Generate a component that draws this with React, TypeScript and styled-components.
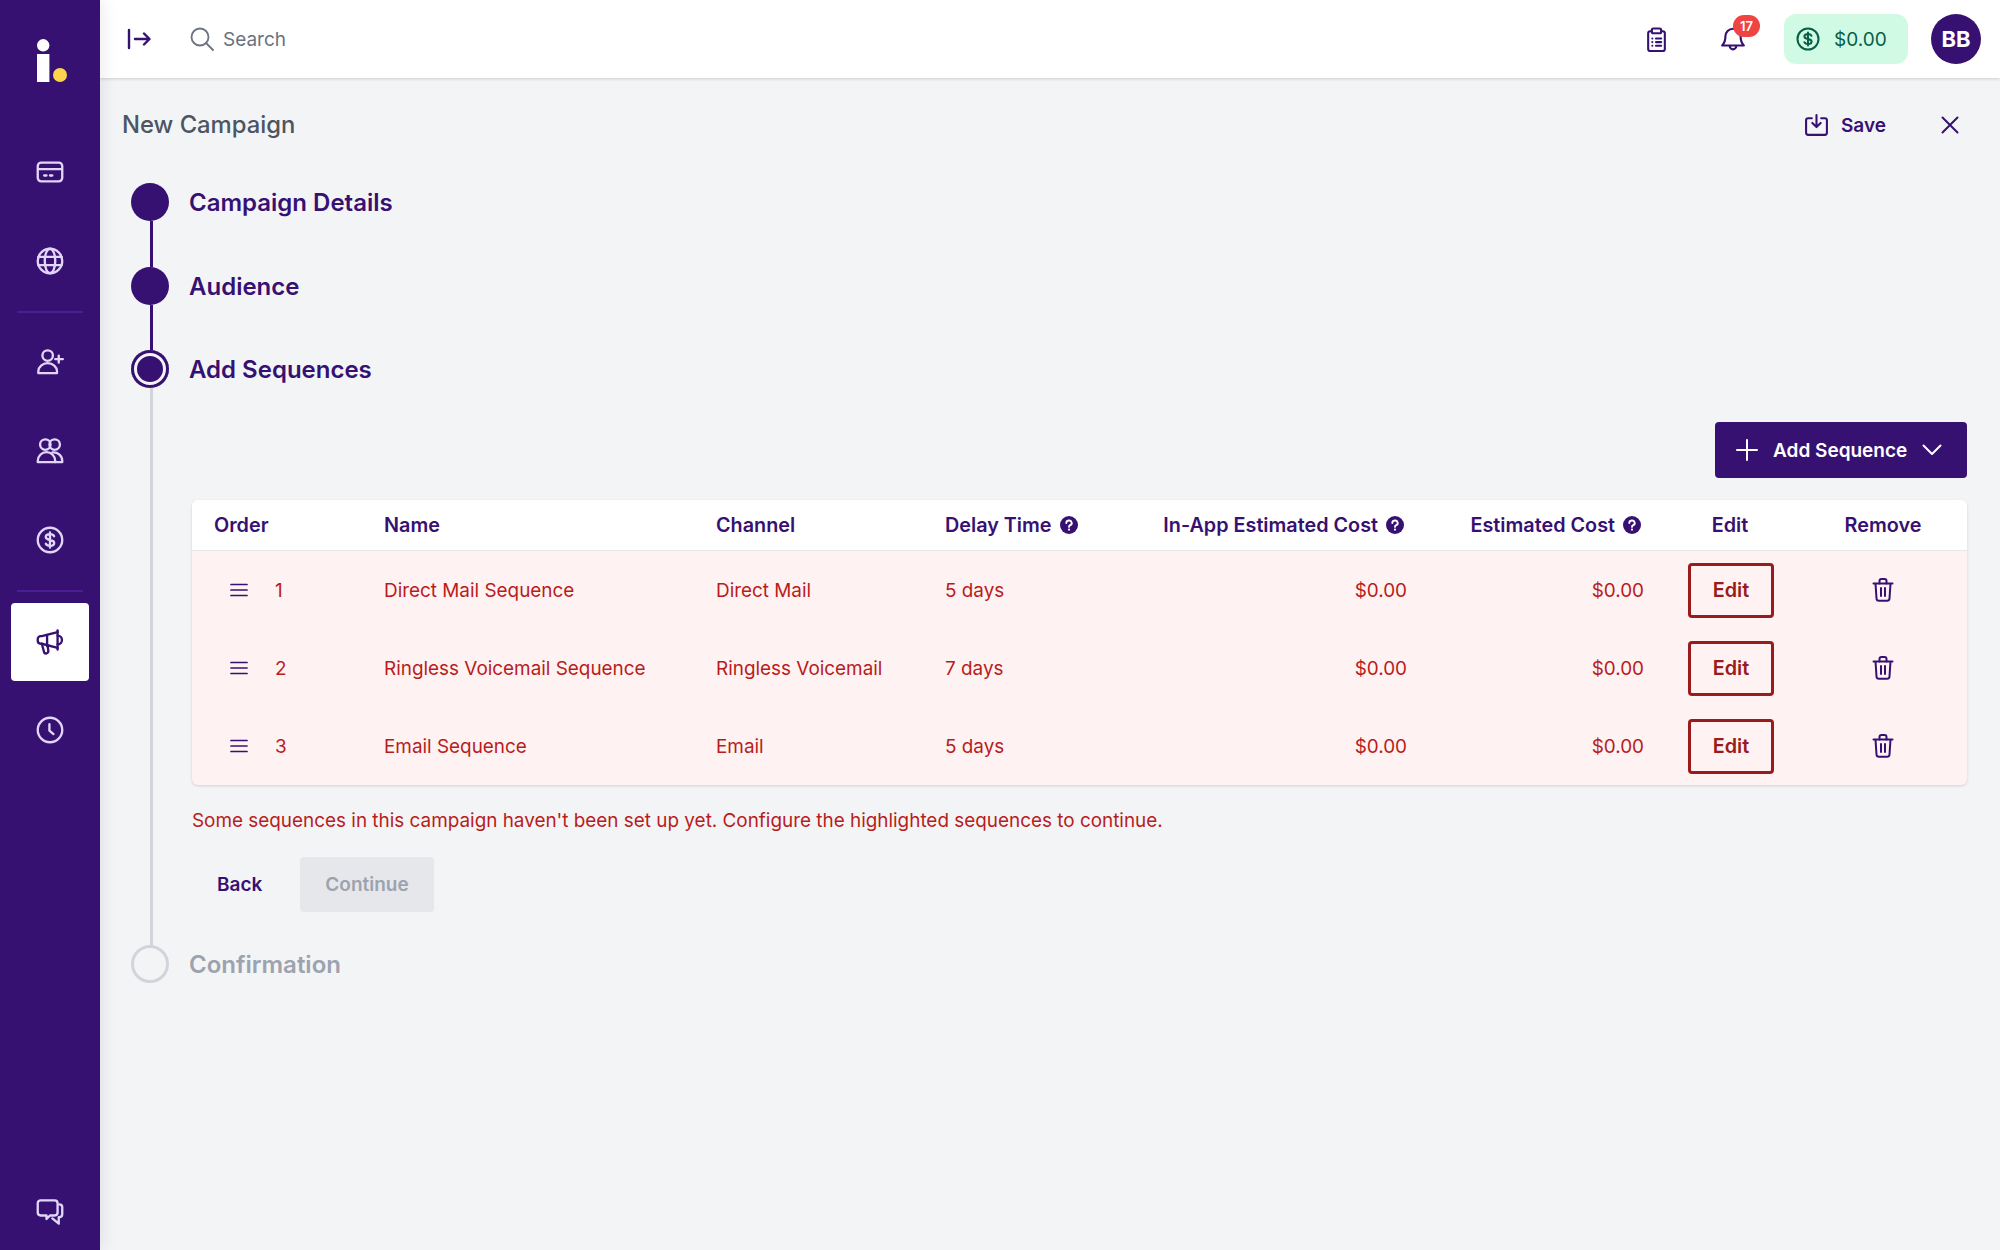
import React from "react";
import styled, { createGlobalStyle } from "styled-components";

const PURPLE = "#361172";
const RED = "#b91c1c";

const Global = createGlobalStyle`
  html, body { margin: 0; padding: 0; height: 100%; }
  body { font-family: Inter, "Liberation Sans", sans-serif; background: #f3f4f6; color: ${PURPLE}; }
  #root { height: 100%; }
  * { box-sizing: border-box; }
`;

const Page = styled.div`
  display: flex;
  width: 2000px;
  height: 1250px;
  overflow: hidden;
  background: #f3f4f6;
`;

const Sidebar = styled.aside`
  position: relative;
  z-index: 2;
  flex: 0 0 100px;
  display: flex;
  flex-direction: column;
  align-items: center;
  background: ${PURPLE};
  box-shadow: 2px 0 16px rgba(17, 24, 39, 0.09);
`;

const LogoSlot = styled.div`
  height: 133px;
  width: 100%;
  display: flex;
  justify-content: center;
  padding: 39px 0 0 4px;
`;

const SideNav = styled.nav`
  display: flex;
  flex-direction: column;
  align-items: center;
  gap: 11px;
  flex: 1;
`;

const SideItem = styled.div<{ $active?: boolean }>`
  width: 78px;
  height: 78px;
  flex: 0 0 78px;
  display: flex;
  align-items: center;
  justify-content: center;
  border-radius: 4px;
  background: ${(p) => (p.$active ? "#fff" : "transparent")};
  color: ${(p) => (p.$active ? PURPLE : "#e2d6f8")};
  margin-bottom: ${(p) => (p.$active ? "-1px" : "0")};
`;

const SideFoot = styled(SideItem)`
  padding-top: 2px;
`;

const SideDivider = styled.div<{ $flush?: boolean }>`
  width: 66px;
  height: 2px;
  background: #4c1d95;
  margin-bottom: ${(p) => (p.$flush ? "0" : "-1px")};
`;

const Main = styled.div`
  flex: 1;
  min-width: 0;
  display: flex;
  flex-direction: column;
`;

const TopBar = styled.header`
  height: 78px;
  flex: 0 0 78px;
  background: #fff;
  display: flex;
  align-items: center;
  padding: 0 19px 0 27px;
  box-shadow: 0 1px 3px rgba(0, 0, 0, 0.16);
`;

const SearchBox = styled.div`
  display: flex;
  align-items: center;
  gap: 9px;
  margin-left: 35px;
  flex: 1;
  color: #6b7280;
  font-size: 19px;
`;

const TopIcon = styled.div`
  position: relative;
  display: flex;
  align-items: center;
  justify-content: center;
  width: 28px;
  height: 28px;
  color: ${PURPLE};
`;

const CollapseSlot = styled(TopIcon)`
  justify-content: flex-start;
`;

const Bell = styled(TopIcon)`
  margin-left: 49px;
`;

const Badge = styled.span`
  position: absolute;
  left: 14px;
  top: -10px;
  width: 27px;
  height: 22px;
  border-radius: 11px;
  background: #ef4444;
  color: #fff;
  font-size: 13px;
  font-weight: 600;
  display: flex;
  align-items: center;
  justify-content: center;
`;

const Balance = styled.div`
  margin-left: 37px;
  width: 124px;
  height: 50px;
  border-radius: 12px;
  background: #d1fae5;
  color: #065f46;
  display: flex;
  align-items: center;
  gap: 14px;
  padding-left: 12px;
  font-size: 19px;
`;

const Avatar = styled.div`
  margin-left: 23px;
  width: 50px;
  height: 50px;
  border-radius: 50%;
  background: ${PURPLE};
  color: #fff;
  font-size: 22px;
  font-weight: 700;
  display: flex;
  align-items: center;
  justify-content: center;
`;

const Content = styled.main`
  flex: 1;
  padding: 28px 33px 0 22px;
  display: flex;
  flex-direction: column;
`;

const HeaderRow = styled.div`
  display: flex;
  align-items: center;
  height: 38px;
  margin-bottom: 39px;
`;

const Title = styled.h1`
  flex: 1;
  margin: 0 0 2px;
  font-size: 23.8px;
  font-weight: 500;
  color: #4b5563;
`;

const SaveButton = styled.div`
  display: flex;
  align-items: center;
  gap: 12px;
  font-size: 19px;
  font-weight: 600;
  color: ${PURPLE};
`;

const CloseButton = styled.div`
  display: flex;
  margin-left: 55px;
  margin-right: 8px;
  color: ${PURPLE};
`;

const Stepper = styled.div`
  display: flex;
  flex-direction: column;
  margin-left: 9px;
`;

const Step = styled.section<{ $h?: string }>`
  display: flex;
  gap: 20px;
  height: ${(p) => p.$h ?? "auto"};
`;

const Rail = styled.div`
  flex: 0 0 38px;
  width: 38px;
  display: flex;
  flex-direction: column;
  align-items: center;
`;

const Dot = styled.div<{ $state: "done" | "current" | "todo" }>`
  flex: 0 0 38px;
  width: 38px;
  height: 38px;
  border-radius: 50%;
  background: ${(p) => (p.$state === "todo" ? "transparent" : PURPLE)};
  border: ${(p) => (p.$state === "todo" ? "3px solid #d1d5db" : "none")};
  box-shadow: ${(p) =>
    p.$state === "current" ? `inset 0 0 0 3px ${PURPLE}, inset 0 0 0 6px #f3f4f6` : "none"};
`;

const Line = styled.div<{ $todo?: boolean }>`
  flex: 1;
  width: 3px;
  margin-left: 3px;
  background: ${(p) => (p.$todo ? "#d1d5db" : PURPLE)};
`;

const StepBody = styled.div`
  flex: 1;
  min-width: 0;
`;

const StepTitle = styled.div<{ $todo?: boolean }>`
  height: 39px;
  display: flex;
  align-items: center;
  font-size: 24px;
  font-weight: 600;
  color: ${(p) => (p.$todo ? "#9ca3af" : PURPLE)};
`;

const Panel = styled.div`
  padding: 33px 0 33px 3px;
`;

const ButtonRow = styled.div`
  display: flex;
  justify-content: flex-end;
  margin-bottom: 22px;
`;

const AddButton = styled.div`
  width: 252px;
  height: 56px;
  border-radius: 4px;
  background: ${PURPLE};
  color: #fff;
  font-size: 19px;
  font-weight: 600;
  display: flex;
  align-items: center;
  padding-left: 21px;
  gap: 15px;
`;

const Table = styled.div`
  border-radius: 6px;
  overflow: hidden;
  background: #fef2f2;
  box-shadow: 0 1px 3px rgba(0, 0, 0, 0.14);
`;

const COLS = "192px 332px 229px 190px 275px 237px 168px 153px";

const HeadRow = styled.div`
  display: grid;
  grid-template-columns: ${COLS};
  height: 51px;
  align-items: center;
  background: #fff;
  border-bottom: 1px solid #e5e7eb;
  font-size: 19.8px;
  font-weight: 600;
  color: ${PURPLE};
`;

const BodyRow = styled.div`
  display: grid;
  grid-template-columns: ${COLS};
  height: 78px;
  align-items: center;
  font-size: 18.9px;
  color: ${RED};
`;

const OrderHead = styled.div`
  padding-left: 22px;
`;

const OrderCell = styled.div`
  display: flex;
  align-items: center;
  padding-left: 38px;
  gap: 27px;
  color: ${RED};
`;

const Drag = styled.span`
  display: flex;
  color: ${PURPLE};
`;

const Cell = styled.div``;

const HeadHelp = styled.div`
  display: flex;
  align-items: center;
  gap: 8px;
`;

const RightHead = styled(HeadHelp)`
  justify-content: flex-end;
  padding-right: 6px;
`;

const Money = styled.div`
  text-align: right;
  padding-right: 3px;
`;

const Centered = styled.div`
  display: flex;
  justify-content: center;
`;

const EditHead = styled(Centered)`
  padding-right: 2px;
`;

const RemoveCell = styled(Centered)`
  padding-right: 17px;
  color: ${PURPLE};
`;

const EditButton = styled.div`
  width: 86px;
  height: 55px;
  border: 3px solid #991b1b;
  border-radius: 4px;
  color: #991b1b;
  font-size: 19.8px;
  font-weight: 600;
  display: flex;
  align-items: center;
  justify-content: center;
`;

const ErrorText = styled.p`
  margin: 22px 0;
  font-size: 18.9px;
  line-height: 28px;
  color: ${RED};
`;

const Actions = styled.div`
  display: flex;
  align-items: center;
  gap: 24px;
`;

const BackButton = styled.div`
  padding-left: 25px;
  width: 84px;
  font-size: 19px;
  font-weight: 600;
  color: ${PURPLE};
`;

const ContinueButton = styled.div`
  width: 134px;
  height: 55px;
  border-radius: 4px;
  background: #e5e7eb;
  color: #9ca3af;
  font-size: 19px;
  font-weight: 600;
  display: flex;
  align-items: center;
  justify-content: center;
`;

type IP = { size?: number; sw?: number; children: React.ReactNode };
const Svg = ({ size = 28, sw = 2, children }: IP) => (
  <svg
    width={size}
    height={size}
    viewBox="0 0 24 24"
    fill="none"
    stroke="currentColor"
    strokeWidth={sw}
    strokeLinecap="round"
    strokeLinejoin="round"
  >
    {children}
  </svg>
);

const Logo = () => (
  <svg width="30" height="43" viewBox="0 0 30 43">
    <circle cx="6.200" cy="6.300" r="6.200" fill="#fff" />
    <rect x="0" y="15" width="12.400" height="28" fill="#fff" />
    <circle cx="23" cy="36" r="7" fill="#fcd34d" />
  </svg>
);

const CardIcon = () => (
  <Svg>
    <rect x="1.500" y="4" width="21" height="16" rx="3" />
    <path d="M2 9.500h20" />
    <path d="M7 15h2M12 15h2" />
  </Svg>
);
const GlobeIcon = () => (
  <Svg>
    <circle cx="12" cy="12" r="10.500" />
    <ellipse cx="12" cy="12" rx="4.500" ry="10.500" />
    <path d="M2 8.500h20M2 15.500h20" />
  </Svg>
);
const UserPlusIcon = () => (
  <Svg>
    <circle cx="10" cy="6.500" r="4.500" />
    <path d="M2 21.500v-1.500a8 7 0 0 1 16 0v1.500z" />
    <path d="M19.500 6.500v6M16.500 9.500h6.500" />
  </Svg>
);
const UsersIcon = () => (
  <Svg>
    <circle cx="8" cy="6.500" r="4.500" />
    <circle cx="16" cy="6.500" r="4.500" />
    <path d="M1.500 21.500v-1a7.500 7.500 0 0 1 15 0v1z" />
    <path d="M14 13.200a7.500 7.500 0 0 1 8.500 7.300v1h-6" />
  </Svg>
);
const DollarIcon = ({ size = 28 }: { size?: number }) => (
  <Svg size={size}>
    <circle cx="12" cy="12" r="10.500" />
    <path d="M15.500 8.800C15 7.600 13.600 7 12 7c-2 0-3.600 1-3.600 2.500S10 11.600 12 12s3.600 1 3.600 2.500S14 17 12 17c-1.600 0-3-.6-3.600-1.800M12 5.500v13" />
  </Svg>
);
const MegaphoneIcon = () => (
  <Svg>
    <path d="M18.500 2v16.500" />
    <path d="M18.500 3.500 5 7H4a2.500 2.500 0 0 0-2.500 2.500V11A2.500 2.500 0 0 0 4 13.500h1l13.500 3.500" />
    <path d="M9.500 6v9.500" />
    <path d="M5 13.500l2 7.500a2 2 0 0 0 3.600-.8L10 15" />
    <path d="M18.500 6.500a3.700 3.700 0 0 1 0 7.500" />
  </Svg>
);
const ClockIcon = () => (
  <Svg>
    <circle cx="12" cy="12" r="10.500" />
    <path d="M11.500 7v5.500l3.500 3" />
  </Svg>
);
const ChatIcon = () => (
  <Svg>
    <path d="M4 2h12a2.500 2.500 0 0 1 2.500 2.500v8A2.500 2.500 0 0 1 16 15h-4l-3 3v-3H4a2.500 2.500 0 0 1-2.500-2.500v-8A2.500 2.500 0 0 1 4 2z" />
    <path d="M20 5.500a2.500 2.500 0 0 1 2.500 2.500v6a2.500 2.500 0 0 1-2.500 2.500h-.5V22l-5.500-4.500" />
  </Svg>
);
const CollapseIcon = () => (
  <svg width="24" height="22" viewBox="0 0 24 22" fill="none" stroke="currentColor" strokeWidth="2.400" strokeLinecap="round" strokeLinejoin="round">
    <path d="M2 2v18M8 11h14M17 5.500 22.500 11 17 16.500" />
  </svg>
);
const SearchIcon = () => (
  <svg width="24" height="24" viewBox="0 0 24 24" fill="none" stroke="currentColor" strokeWidth="1.800" strokeLinecap="round">
    <circle cx="10" cy="10" r="8.500" />
    <path d="m16 16 7 7" />
  </svg>
);
const ClipboardIcon = () => (
  <Svg size={25}>
    <path d="M7.500 4H6a2 2 0 0 0-2 2v15a2 2 0 0 0 2 2h12a2 2 0 0 0 2-2V6a2 2 0 0 0-2-2h-1.500" />
    <rect x="7.500" y="1.500" width="9" height="4.500" rx="1.500" />
    <path d="M8 11h.01M8 14.500h.01M8 18h.01M11.500 11h5M11.500 14.500h5M11.500 18h5" />
  </Svg>
);
const BellIcon = () => (
  <Svg size={26}>
    <path d="M12 2.500a7 7 0 0 0-7 7c0 5-1.500 7-3 8.500h20c-1.500-1.500-3-3.500-3-8.500a7 7 0 0 0-7-7z" />
    <path d="M9 18.500a3 3 0 0 0 6 0" />
  </Svg>
);
const SaveIcon = () => (
  <Svg size={25}>
    <path d="M7.500 5H4a2 2 0 0 0-2 2v12a2 2 0 0 0 2 2h16a2 2 0 0 0 2-2V7a2 2 0 0 0-2-2h-3.500" />
    <path d="M12 2v11M8 9.500l4 4 4-4" />
  </Svg>
);
const CloseIcon = () => (
  <svg width="18" height="18" viewBox="0 0 18 18" fill="none" stroke="currentColor" strokeWidth="2" strokeLinecap="round">
    <path d="M1.500 1.500 16.500 16.500M16.500 1.500 1.500 16.500" />
  </svg>
);
const PlusIcon = () => (
  <svg width="22" height="22" viewBox="0 0 22 22" fill="none" stroke="currentColor" strokeWidth="2" strokeLinecap="round">
    <path d="M11 1v20M1 11h20" />
  </svg>
);
const ChevronIcon = () => (
  <svg width="20" height="12" viewBox="0 0 20 12" fill="none" stroke="currentColor" strokeWidth="2" strokeLinecap="round" strokeLinejoin="round">
    <path d="M1.500 1.500 10 10l8.500-8.500" />
  </svg>
);
const HelpIcon = () => (
  <svg width="18" height="18" viewBox="0 0 18 18">
    <circle cx="9" cy="9" r="9" fill="currentColor" />
    <path d="M6.300 7a2.700 2.500 0 1 1 3.900 2.200c-.8.4-1.200.9-1.200 1.700" fill="none" stroke="#fff" strokeWidth="1.900" strokeLinecap="round" />
    <circle cx="9" cy="13.600" r="1.100" fill="#fff" />
  </svg>
);
const DragIcon = () => (
  <svg width="18" height="14" viewBox="0 0 18 14" fill="none" stroke="currentColor" strokeWidth="1.700" strokeLinecap="round">
    <path d="M1 1.500h16M1 7h16M1 12.500h16" />
  </svg>
);
const TrashIcon = () => (
  <svg width="22" height="24" viewBox="0 0 22 24" fill="none" stroke="currentColor" strokeWidth="2" strokeLinecap="round" strokeLinejoin="round">
    <path d="M1.500 5.500h19M3.500 5.500l1 15a2.500 2.500 0 0 0 2.500 2.300h8a2.500 2.500 0 0 0 2.500-2.300l1-15" />
    <path d="M7.500 5.500V3a2 2 0 0 1 2-2h3a2 2 0 0 1 2 2v2.500M9 10v8M13 10v8" />
  </svg>
);

const rows = [
  { n: 1, name: "Direct Mail Sequence", channel: "Direct Mail", delay: "5 days" },
  { n: 2, name: "Ringless Voicemail Sequence", channel: "Ringless Voicemail", delay: "7 days" },
  { n: 3, name: "Email Sequence", channel: "Email", delay: "5 days" },
];

export default function App() {
  return (
    <Page>
      <Global />
      <Sidebar>
        <LogoSlot>
          <Logo />
        </LogoSlot>
        <SideNav>
          <SideItem><CardIcon /></SideItem>
          <SideItem><GlobeIcon /></SideItem>
          <SideDivider />
          <SideItem><UserPlusIcon /></SideItem>
          <SideItem><UsersIcon /></SideItem>
          <SideItem><DollarIcon /></SideItem>
          <SideDivider $flush />
          <SideItem $active><MegaphoneIcon /></SideItem>
          <SideItem><ClockIcon /></SideItem>
        </SideNav>
        <SideFoot><ChatIcon /></SideFoot>
      </Sidebar>
      <Main>
        <TopBar>
          <CollapseSlot><CollapseIcon /></CollapseSlot>
          <SearchBox>
            <SearchIcon />
            Search
          </SearchBox>
          <TopIcon><ClipboardIcon /></TopIcon>
          <Bell>
            <BellIcon />
            <Badge>17</Badge>
          </Bell>
          <Balance>
            <DollarIcon size={24} />
            $0.00
          </Balance>
          <Avatar>BB</Avatar>
        </TopBar>
        <Content>
          <HeaderRow>
            <Title>New Campaign</Title>
            <SaveButton>
              <SaveIcon />
              Save
            </SaveButton>
            <CloseButton><CloseIcon /></CloseButton>
          </HeaderRow>
          <Stepper>
            <Step $h="84px">
              <Rail><Dot $state="done" /><Line /></Rail>
              <StepBody><StepTitle>Campaign Details</StepTitle></StepBody>
            </Step>
            <Step $h="83px">
              <Rail><Dot $state="done" /><Line /></Rail>
              <StepBody><StepTitle>Audience</StepTitle></StepBody>
            </Step>
            <Step>
              <Rail><Dot $state="current" /><Line $todo /></Rail>
              <StepBody>
                <StepTitle>Add Sequences</StepTitle>
                <Panel>
                  <ButtonRow>
                    <AddButton>
                      <PlusIcon />
                      Add Sequence
                      <ChevronIcon />
                    </AddButton>
                  </ButtonRow>
                  <Table>
                    <HeadRow>
                      <OrderHead>Order</OrderHead>
                      <Cell>Name</Cell>
                      <Cell>Channel</Cell>
                      <HeadHelp>Delay Time <HelpIcon /></HeadHelp>
                      <RightHead>In-App Estimated Cost <HelpIcon /></RightHead>
                      <RightHead>Estimated Cost <HelpIcon /></RightHead>
                      <EditHead>Edit</EditHead>
                      <RemoveCell>Remove</RemoveCell>
                    </HeadRow>
                    {rows.map((r) => (
                      <BodyRow key={r.n}>
                        <OrderCell>
                          <Drag><DragIcon /></Drag>
                          {r.n}
                        </OrderCell>
                        <Cell>{r.name}</Cell>
                        <Cell>{r.channel}</Cell>
                        <Cell>{r.delay}</Cell>
                        <Money>$0.00</Money>
                        <Money>$0.00</Money>
                        <Centered><EditButton>Edit</EditButton></Centered>
                        <RemoveCell><TrashIcon /></RemoveCell>
                      </BodyRow>
                    ))}
                  </Table>
                  <ErrorText>
                    Some sequences in this campaign haven't been set up yet. Configure the highlighted sequences to continue.
                  </ErrorText>
                  <Actions>
                    <BackButton>Back</BackButton>
                    <ContinueButton>Continue</ContinueButton>
                  </Actions>
                </Panel>
              </StepBody>
            </Step>
            <Step>
              <Rail><Dot $state="todo" /></Rail>
              <StepBody><StepTitle $todo>Confirmation</StepTitle></StepBody>
            </Step>
          </Stepper>
        </Content>
      </Main>
    </Page>
  );
}
